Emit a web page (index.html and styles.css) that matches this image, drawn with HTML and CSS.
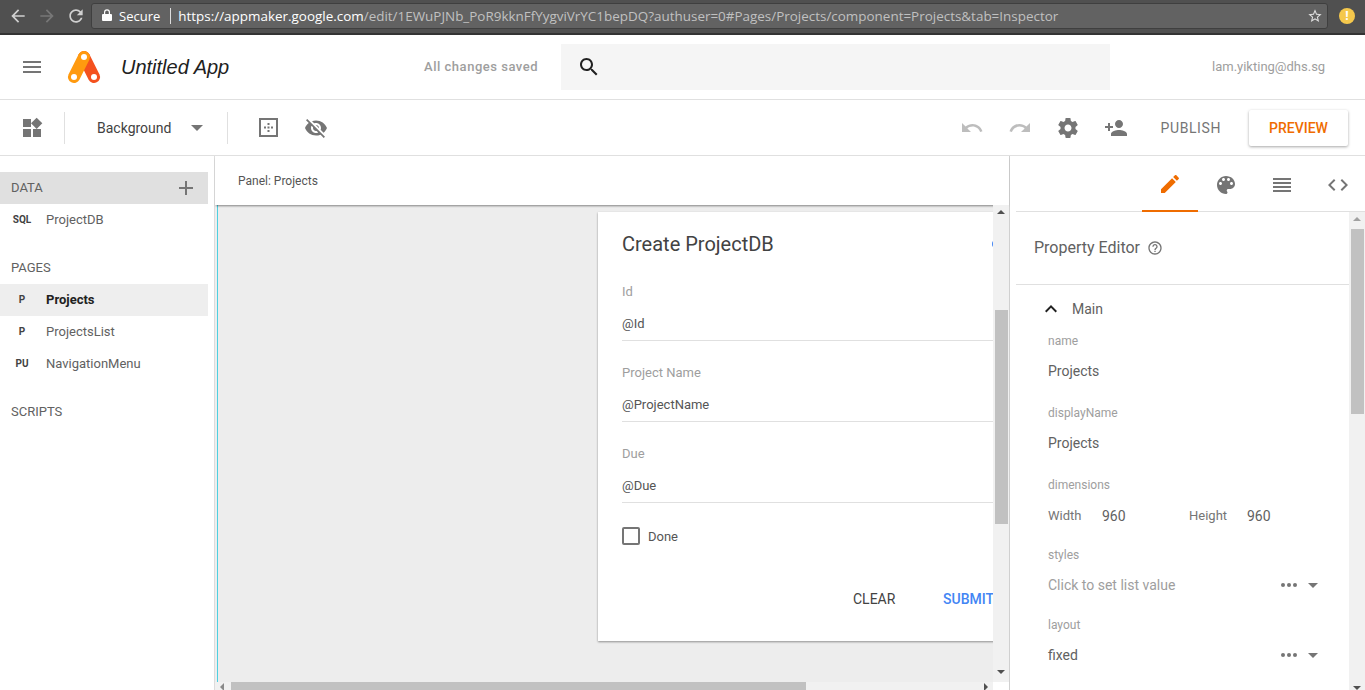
FILE: index.html
```html
<!DOCTYPE html>
<html lang="en">
<head>
<meta charset="utf-8">
<title>Untitled App</title>
<link rel="stylesheet" href="styles.css">
</head>
<body>
<div class="app">
  <div class="chrome">
    <svg class="nav-ico" viewBox="0 0 24 24"><path fill="#d0d0d0" d="M20 11H7.83l5.59-5.59L12 4l-8 8 8 8 1.41-1.41L7.83 13H20v-2z"/></svg>
    <svg class="nav-ico" viewBox="0 0 24 24"><path fill="#777" d="M12 4l-1.41 1.41L16.17 11H4v2h12.17l-5.58 5.59L12 20l8-8z"/></svg>
    <svg class="nav-ico" viewBox="0 0 24 24"><path fill="#d0d0d0" d="M17.65 6.35C16.2 4.9 14.21 4 12 4c-4.42 0-7.99 3.58-7.99 8s3.57 8 7.99 8c3.73 0 6.84-2.55 7.73-6h-2.08c-.82 2.33-3.04 4-5.65 4-3.31 0-6-2.69-6-6s2.69-6 6-6c1.66 0 3.14.69 4.22 1.78L13 11h7V4l-2.35 2.35z"/></svg>
    <div class="omnibox">
      <svg class="lock" viewBox="0 0 10 12"><path fill="#fff" d="M1 5h8a1 1 0 0 1 1 1v5a1 1 0 0 1-1 1H1a1 1 0 0 1-1-1V6a1 1 0 0 1 1-1zM2 5V3.2a3 3 0 0 1 6 0V5H6.8V3.2a1.8 1.8 0 0 0-3.6 0V5z"/></svg>
      <span class="secure">Secure</span>
      <span class="omni-sep"></span>
      <span class="url"><span class="origin">https://appmaker.google.com</span>/edit/1EWuPJNb_PoR9kknFfYygviVrYC1bepDQ?authuser=0#Pages/Projects/component=Projects&amp;tab=Inspector</span>
      <svg class="star" viewBox="0 0 24 24"><path fill="#e0e0e0" d="M22 9.24l-7.19-.62L12 2 9.19 8.63 2 9.24l5.46 4.73L5.82 21 12 17.27 18.18 21l-1.63-7.03L22 9.24zM12 15.4l-3.76 2.27 1-4.28-3.32-2.88 4.38-.38L12 6.1l1.71 4.04 4.38.38-3.32 2.88 1 4.28L12 15.4z"/></svg>
    </div>
    <span class="badge">!</span>
  </div>

  <header class="header">
    <svg class="ico-24 menu" viewBox="0 0 24 24"><path fill="#757575" d="M3 18h18v-2H3v2zm0-5h18v-2H3v2zm0-7v2h18V6H3z"/></svg>
    <svg class="logo" viewBox="0 0 32 32">
      <line x1="16" y1="6" x2="26" y2="26" stroke="#f4511e" stroke-width="12" stroke-linecap="round"/>
      <line x1="16" y1="6" x2="6" y2="26" stroke="#ff9a0f" stroke-width="12" stroke-linecap="round"/>
      <circle cx="16" cy="6" r="3" fill="#fff"/><circle cx="6" cy="26" r="3" fill="#fff"/><circle cx="26" cy="26" r="3" fill="#fff"/>
    </svg>
    <span class="app-name">Untitled App</span>
    <span class="saved">All changes saved</span>
    <div class="search">
      <svg class="ico-24" viewBox="0 0 24 24"><path fill="#212121" d="M15.5 14h-.79l-.28-.27C15.41 12.59 16 11.11 16 9.5 16 5.91 13.09 3 9.5 3S3 5.91 3 9.5 5.91 16 9.5 16c1.61 0 3.09-.59 4.23-1.57l.27.28v.79l5 4.99L20.49 19l-4.99-5zm-6 0C7.01 14 5 11.99 5 9.5S7.01 5 9.5 5 14 7.01 14 9.5 11.99 14 9.5 14z"/></svg>
    </div>
    <span class="user">lam.yikting@dhs.sg</span>
  </header>

  <div class="toolbar">
    <svg class="ico-24 widgets" viewBox="0 0 24 24"><path fill="#757575" d="M13 13v8h8v-8h-8zM3 21h8v-8H3v8zM3 3v8h8V3H3zm13.66-1.31L11 7.34 16.66 13l5.66-5.66-5.66-5.65z"/></svg>
    <span class="tb-div first"></span>
    <span class="bg-label">Background</span>
    <span class="caret"></span>
    <span class="tb-div second"></span>
    <svg class="frame" viewBox="0 0 19 19">
      <rect x="1" y="1" width="17" height="17" fill="none" stroke="#757575" stroke-width="2"/>
      <path fill="#757575" d="M8.5 5h2v2h-2zM8.5 8.500h2v2h-2zM5 8.500h2v2H5zM12 8.500h2v2h-2zM8.500 12h2v2h-2z"/>
    </svg>
    <svg class="ico-24 eye" viewBox="0 0 24 24"><path fill="#757575" d="M12 7c2.76 0 5 2.24 5 5 0 .65-.13 1.26-.36 1.83l2.92 2.92c1.51-1.26 2.7-2.89 3.43-4.75-1.73-4.39-6-7.5-11-7.5-1.4 0-2.74.25-3.98.7l2.16 2.16C10.74 7.13 11.35 7 12 7zM2 4.27l2.28 2.28.46.46C3.08 8.3 1.78 10.02 1 12c1.73 4.39 6 7.5 11 7.5 1.55 0 3.03-.3 4.38-.84l.42.42L19.73 22 21 20.73 3.27 3 2 4.27zM7.53 9.8l1.55 1.55c-.05.21-.08.43-.08.65 0 1.66 1.34 3 3 3 .22 0 .44-.03.65-.08l1.55 1.55c-.67.33-1.41.53-2.2.53-2.76 0-5-2.24-5-5 0-.79.2-1.53.53-2.2zm4.31-.78l3.15 3.15.02-.16c0-1.66-1.34-3-3-3l-.17.01z"/></svg>
    <div class="tb-right">
      <svg class="ico-24" viewBox="0 0 24 24"><path fill="#bdbdbd" d="M12.5 8c-2.65 0-5.05.99-6.9 2.6L2 7v9h9l-3.62-3.62c1.39-1.16 3.16-1.88 5.12-1.88 3.54 0 6.55 2.31 7.6 5.5l2.37-.78C21.08 11.03 17.15 8 12.5 8z"/></svg>
      <svg class="ico-24" viewBox="0 0 24 24"><path fill="#bdbdbd" d="M18.4 10.6C16.55 8.99 14.15 8 11.5 8c-4.65 0-8.58 3.03-9.96 7.22L3.9 16c1.05-3.19 4.05-5.5 7.6-5.5 1.95 0 3.73.72 5.12 1.88L13 16h9V7l-3.6 3.6z"/></svg>
      <svg class="ico-24" viewBox="0 0 24 24"><path fill="#757575" d="M19.43 12.98c.04-.32.07-.64.07-.98s-.03-.66-.07-.98l2.11-1.65c.19-.15.24-.42.12-.64l-2-3.46c-.12-.22-.39-.3-.61-.22l-2.49 1c-.52-.4-1.08-.73-1.69-.98l-.38-2.65C14.46 2.18 14.25 2 14 2h-4c-.25 0-.46.18-.49.42l-.38 2.65c-.61.25-1.17.59-1.69.98l-2.49-1c-.23-.09-.49 0-.61.22l-2 3.46c-.13.22-.07.49.12.64l2.11 1.65c-.04.32-.07.65-.07.98s.03.66.07.98l-2.11 1.65c-.19.15-.24.42-.12.64l2 3.46c.12.22.39.3.61.22l2.49-1c.52.4 1.08.73 1.69.98l.38 2.65c.03.24.24.42.49.42h4c.25 0 .46-.18.49-.42l.38-2.65c.61-.25 1.17-.59 1.69-.98l2.49 1c.23.09.49 0 .61-.22l2-3.46c.12-.22.07-.49-.12-.64l-2.11-1.65zM12 15.5c-1.93 0-3.5-1.57-3.5-3.5s1.57-3.5 3.5-3.5 3.5 1.57 3.5 3.5-1.57 3.5-3.5 3.5z"/></svg>
      <svg class="ico-24" viewBox="0 0 24 24"><path fill="#757575" d="M15 12c2.21 0 4-1.79 4-4s-1.79-4-4-4-4 1.79-4 4 1.79 4 4 4zm-9-2V7H4v3H1v2h3v3h2v-3h3v-2H6zm9 4c-2.67 0-8 1.34-8 4v2h16v-2c0-2.66-5.33-4-8-4z"/></svg>
      <span class="publish">PUBLISH</span>
      <span class="preview">PREVIEW</span>
    </div>
  </div>

  <div class="main">
    <aside class="sidebar">
      <div class="sec sec-data"><span>DATA</span><svg class="plus" viewBox="0 0 14 14"><path fill="#757575" d="M6 0h2v6h6v2H8v6H6V8H0V6h6z"/></svg></div>
      <div class="row"><span class="kind">SQL</span><span>ProjectDB</span></div>
      <div class="sec spaced">PAGES</div>
      <div class="row active"><span class="kind">P</span><span>Projects</span></div>
      <div class="row"><span class="kind">P</span><span>ProjectsList</span></div>
      <div class="row"><span class="kind">PU</span><span>NavigationMenu</span></div>
      <div class="sec spaced">SCRIPTS</div>
    </aside>

    <section class="stage">
      <div class="crumb">Panel: Projects</div>
      <div class="stage-body">
        <div class="viewport">
          <div class="card">
            <span class="spinner"></span>
            <h2 class="card-title">Create ProjectDB</h2>
            <div class="field"><div class="f-label">Id</div><div class="f-value">@Id</div></div>
            <div class="field"><div class="f-label">Project Name</div><div class="f-value">@ProjectName</div></div>
            <div class="field"><div class="f-label">Due</div><div class="f-value">@Due</div></div>
            <div class="check"><span class="box"></span><span>Done</span></div>
            <div class="actions"><span class="clear">CLEAR</span><span class="submit">SUBMIT</span></div>
          </div>
        </div>
        <div class="vbar center-bar">
          <span class="arr up"></span>
          <div class="thumb"></div>
          <span class="arr down"></span>
        </div>
      </div>
      <div class="hbar">
        <span class="arr-h left"></span>
        <div class="hthumb"></div>
        <span class="arr-h right"></span>
      </div>
    </section>

    <section class="inspector">
      <div class="tabs">
        <div class="tab on"><svg class="ico-24" viewBox="0 0 24 24"><path fill="#ef6c00" d="M3 17.25V21h3.75L17.81 9.94l-3.75-3.75L3 17.25zM20.71 7.04c.39-.39.39-1.02 0-1.41l-2.34-2.34c-.39-.39-1.02-.39-1.41 0l-1.83 1.83 3.75 3.75 1.83-1.83z"/></svg></div>
        <div class="tab"><svg class="ico-24" viewBox="0 0 24 24"><path fill="#757575" d="M12 3c-4.97 0-9 4.03-9 9s4.03 9 9 9c.83 0 1.5-.67 1.5-1.5 0-.39-.15-.74-.39-1.01-.23-.26-.38-.61-.38-.99 0-.83.67-1.5 1.5-1.5H16c2.76 0 5-2.24 5-5 0-4.42-4.03-8-9-8zm-5.5 9c-.83 0-1.5-.67-1.5-1.5S5.67 9 6.5 9 8 9.67 8 10.5 7.33 12 6.5 12zm3-4C8.67 8 8 7.33 8 6.5S8.67 5 9.5 5s1.5.67 1.5 1.5S10.33 8 9.5 8zm5 0c-.83 0-1.5-.67-1.5-1.5S13.67 5 14.5 5s1.5.67 1.5 1.5S15.33 8 14.5 8zm3 4c-.83 0-1.5-.67-1.5-1.5S16.67 9 17.5 9s1.5.67 1.5 1.5-.67 1.5-1.5 1.5z"/></svg></div>
        <div class="tab"><svg class="ico-24" viewBox="0 0 24 24"><path fill="#757575" d="M3 15h18v-2H3v2zm0 4h18v-2H3v2zm0-8h18V9H3v2zm0-6v2h18V5H3z"/></svg></div>
        <div class="tab"><svg class="ico-24" viewBox="0 0 24 24"><path fill="#757575" d="M9.4 16.6L4.8 12l4.6-4.6L8 6l-6 6 6 6 1.4-1.4zm5.2 0l4.6-4.6-4.6-4.6L16 6l6 6-6 6-1.4-1.4z"/></svg></div>
      </div>
      <div class="insp-body">
        <div class="insp-scroll">
          <div class="pe-head"><span>Property Editor</span><svg class="help" viewBox="0 0 24 24"><path fill="#757575" d="M11 18h2v-2h-2v2zm1-16C6.48 2 2 6.48 2 12s4.48 10 10 10 10-4.48 10-10S17.52 2 12 2zm0 18c-4.41 0-8-3.59-8-8s3.59-8 8-8 8 3.59 8 8-3.59 8-8 8zm0-14c-2.21 0-4 1.79-4 4h2c0-1.1.9-2 2-2s2 .9 2 2c0 2-3 1.75-3 5h2c0-2.25 3-2.5 3-5 0-2.21-1.79-4-4-4z"/></svg></div>
          <div class="main-sec"><svg class="ico-24 chev" viewBox="0 0 24 24"><path fill="#212121" d="M12 8l-6 6 1.41 1.41L12 10.83l4.59 4.58L18 14z"/></svg><span>Main</span></div>
          <div class="prop wide"><div class="p-label">name</div><div class="p-value">Projects</div></div>
          <div class="prop wide"><div class="p-label">displayName</div><div class="p-value">Projects</div></div>
          <div class="prop"><div class="p-label">dimensions</div>
            <div class="p-value dims"><span class="dim-k w">Width</span><span class="dim-v w">960</span><span class="dim-k h">Height</span><span class="dim-v">960</span></div></div>
          <div class="prop"><div class="p-label">styles</div>
            <div class="p-value pick muted"><span>Click to set list value</span><span class="more"><i></i><i></i><i></i></span><span class="caret small"></span></div></div>
          <div class="prop"><div class="p-label">layout</div>
            <div class="p-value pick"><span>fixed</span><span class="more"><i></i><i></i><i></i></span><span class="caret small"></span></div></div>
        </div>
        <div class="vbar insp-bar">
          <span class="arr up"></span>
          <div class="thumb"></div>
          <span class="arr down"></span>
        </div>
      </div>
    </section>
  </div>
</div>
</body>
</html>
```
FILE: styles.css
```css
* { box-sizing: border-box; }
html, body { margin: 0; height: 100%; overflow: hidden; }
body { font-family: Roboto, "Liberation Sans", sans-serif; color: #616161; background: #fff; }
.app { height: 690px; display: flex; flex-direction: column; overflow: hidden; }

/* browser chrome */
.chrome { height: 35px; flex: none; background: #505050; border-bottom: 2px solid #333; display: flex; align-items: center; padding: 0 0 2px 8px; }
.nav-ico { width: 20px; height: 20px; margin-right: 9px; flex: none; }
.omnibox { width: 1237px; height: 26px; margin-left: -4px; background: #626262; border: 1px solid #3f3f3f; border-radius: 3px; display: flex; align-items: center; padding-left: 10px; font: 13.5px "Open Sans", "Noto Sans", sans-serif; }
.lock { width: 10px; height: 12px; flex: none; margin-bottom: 1px; }
.secure { color: #fff; margin-left: 7px; font-size: 13px; }
.omni-sep { width: 1px; height: 16px; background: #ddd; margin: 0 7px 0 10px; }
.url { color: #c0c0c0; white-space: nowrap; font-size: 13.45px; flex: 1; }
.origin { color: #fff; }
.star { width: 16px; height: 16px; flex: none; margin-right: 4px; }
.badge { width: 16px; height: 16px; border-radius: 50%; background: #f5c84c; color: #fff; font: bold 12px/16px "Open Sans", sans-serif; text-align: center; margin-left: 11px; flex: none; }

/* header */
.ico-24 { width: 24px; height: 24px; flex: none; display: block; }
.header { height: 65px; flex: none; border-bottom: 1px solid #e0e0e0; display: flex; align-items: center; padding-left: 20px; }
.logo { width: 32px; height: 32px; flex: none; margin: 0 0 0 24px; overflow: visible; }
.app-name { font: italic 20px "Liberation Sans", sans-serif; color: #212121; margin-left: 21px; width: 303px; }
.saved { font-size: 13px; font-weight: 500; color: #9e9e9e; width: 137px; letter-spacing: .52px; white-space: nowrap; padding-bottom: 2px; }
.search { width: 549px; height: 46px; background: #f5f5f5; display: flex; align-items: center; padding-left: 16px; }
.user { margin-left: 102px; font-size: 13px; color: #9e9e9e; letter-spacing: 0; padding-bottom: 1px; }

/* toolbar */
.toolbar { height: 56px; flex: none; border-bottom: 1px solid #e0e0e0; display: flex; align-items: center; padding-left: 20px; }
.tb-div { width: 1px; height: 32px; background: #e0e0e0; flex: none; }
.tb-div.first { margin-left: 20px; }
.bg-label { margin-left: 32px; font-size: 14px; color: #424242; }
.caret { width: 0; height: 0; border-left: 6px solid transparent; border-right: 6px solid transparent; border-top: 6px solid #757575; margin-left: 20px; flex: none; }
.tb-div.second { margin-left: 24px; }
.frame { width: 19px; height: 19px; margin-left: 31px; flex: none; }
.eye { margin-left: 26px; }
.tb-right { margin-left: auto; display: flex; align-items: center; gap: 24px; padding-right: 17px; }
.publish { font-size: 14px; color: #757575; letter-spacing: .6px; margin-left: 9px; }
.preview { width: 99px; height: 36px; margin-left: 4px; font-size: 14px; font-weight: 500; color: #ef6c00; background: #fff; border-radius: 2px; box-shadow: 0 1px 3px rgba(0,0,0,.35); display: flex; align-items: center; justify-content: center; }

/* main */
.main { flex: 1; min-height: 0; display: flex; }
.sidebar { width: 215px; flex: none; border-right: 1px solid #dcdcdc; padding: 16px 6px 0 0; font-size: 13px; }
.sec, .row { height: 32px; display: flex; align-items: center; }
.sec { padding: 0 0 2px 11px; font-size: 13px; color: #616161; }
.sec-data { background: #e0e0e0; justify-content: space-between; padding-right: 15px; padding-bottom: 1px; }
.plus { width: 14px; height: 14px; }
.spaced { margin-top: 16px; }
.row { color: #616161; padding-bottom: 2px; }
.row.active { background: #eee; color: #212121; font-weight: 700; }
.kind { width: 44px; flex: none; text-align: center; font-size: 10px; font-weight: 700; color: #424242; margin-right: 2px; }

.stage { width: 794px; flex: none; display: flex; flex-direction: column; }
.crumb { height: 49px; flex: none; padding: 1px 0 0 23px; display: flex; align-items: center; font-size: 12px; color: #555; background: #fff; position: relative; box-shadow: 0 2px 2px -1px rgba(0,0,0,.45); }
.stage-body { height: 477px; flex: none; display: flex; background: #eee; }
.viewport { flex: 1; min-width: 0; overflow: hidden; margin-left: 2px; border-left: 1px solid #4dd0e1; background: #ededed; padding: 7px 0 0 380px; }
.card { width: 430px; height: 429px; background: #fff; box-shadow: 0 1px 2px rgba(0,0,0,.4); padding: 0 0 0 24px; position: relative; color: #555; }
.spinner { position: absolute; left: 394px; top: 28px; width: 8px; height: 8px; border-radius: 50%; background: #4285f4; }
.card-title { margin: 0; height: 69px; padding-top: 19px; font-size: 20px; line-height: 26px; font-weight: 400; color: #424242; }
.field { margin-bottom: 21px; }
.f-label { height: 20px; line-height: 22px; font-size: 13px; color: #9e9e9e; }
.f-value { height: 40px; border-bottom: 1px solid #e0e0e0; padding-top: 13px; font-size: 13px; line-height: 20px; color: #555; }
.check { height: 18px; margin-top: 24px; display: flex; align-items: center; font-size: 13px; }
.box { width: 18px; height: 18px; border: 2px solid #757575; border-radius: 2px; margin-right: 8px; }
.actions { margin-top: 36px; height: 36px; display: flex; align-items: center; font-size: 14px; padding-left: 231px; }
.clear { color: #424242; width: 90px; }
.submit { color: #4285f4; font-weight: 500; }

.vbar { flex: none; background: #f1f1f1; position: relative; }
.center-bar { width: 16px; }
.center-bar .thumb { margin-top: 105px; height: 214px; }
.thumb { margin-left: 2px; width: 13px; background: #c1c1c1; }
.arr { position: absolute; left: 4px; width: 0; height: 0; border-left: 4px solid transparent; border-right: 4px solid transparent; }
.arr.up { top: 5px; border-bottom: 4px solid #505050; }
.arr.down { bottom: 8px; border-top: 4px solid #505050; }

.hbar { height: 8px; flex: none; position: relative; overflow: hidden; margin-right: 16px; background: #f1f1f1; }
.hthumb { margin-left: 16px; width: 575px; height: 8px; background: #c1c1c1; }
.arr-h { position: absolute; top: 1px; width: 0; height: 0; border-top: 4px solid transparent; border-bottom: 4px solid transparent; }
.arr-h.left { left: 5px; border-right: 4px solid #8a8a8a; }
.arr-h.right { right: 5px; border-left: 4px solid #505050; }

.inspector { flex: 1; min-width: 0; border-left: 1px solid #d0d0d0; display: flex; flex-direction: column; padding-left: 6px; }
.tabs { height: 56px; flex: none; border-bottom: 1px solid #e0e0e0; display: flex; justify-content: flex-end; margin-right: -1px; }
.tab { width: 56px; height: 56px; display: flex; align-items: center; justify-content: center; padding-top: 1px; }
.tab.on { border-bottom: 2px solid #ef6c00; }
.insp-body { flex: 1; min-height: 0; display: flex; }
.insp-scroll { flex: 1; min-width: 0; overflow: hidden; }
.pe-head { height: 73px; border-bottom: 1px solid #e0e0e0; display: flex; align-items: center; padding: 0 0 2px 18px; font-size: 16px; color: #616161; }
.help { width: 16px; height: 16px; margin-left: 7px; margin-top: 1px; }
.main-sec { height: 46px; display: flex; align-items: center; padding: 2px 0 0 23px; font-size: 14px; color: #616161; }
.chev { margin-right: 9px; }
.prop { padding-left: 32px; margin-bottom: 10px; }
.prop.wide { margin-bottom: 12px; }
.p-label { height: 20px; line-height: 20px; font-size: 12px; color: #9e9e9e; }
.p-value { height: 40px; line-height: 40px; font-size: 14px; color: #616161; }
.dims { display: flex; align-items: center; padding-top: 1px; }
.dim-k { font-size: 13px; color: #757575; }
.dim-k.w { width: 54px; }
.dim-v.w { width: 87px; }
.dim-k.h { width: 58px; }
.pick { display: flex; align-items: center; padding-right: 31px; }
.muted { color: #9e9e9e; }
.more { margin-left: auto; display: flex; gap: 2px; }
.more i { width: 4px; height: 4px; border-radius: 50%; background: #757575; display: block; }
.caret.small { border-left-width: 5px; border-right-width: 5px; border-top-width: 5px; margin-left: 11px; }
.insp-bar { width: 16px; }
.insp-bar .thumb { margin-top: 17px; height: 185px; }
.insp-bar .arr { border-bottom-color: #a0a0a0; }
.insp-bar .arr.down { bottom: 0; border-top-color: #505050; }
```
